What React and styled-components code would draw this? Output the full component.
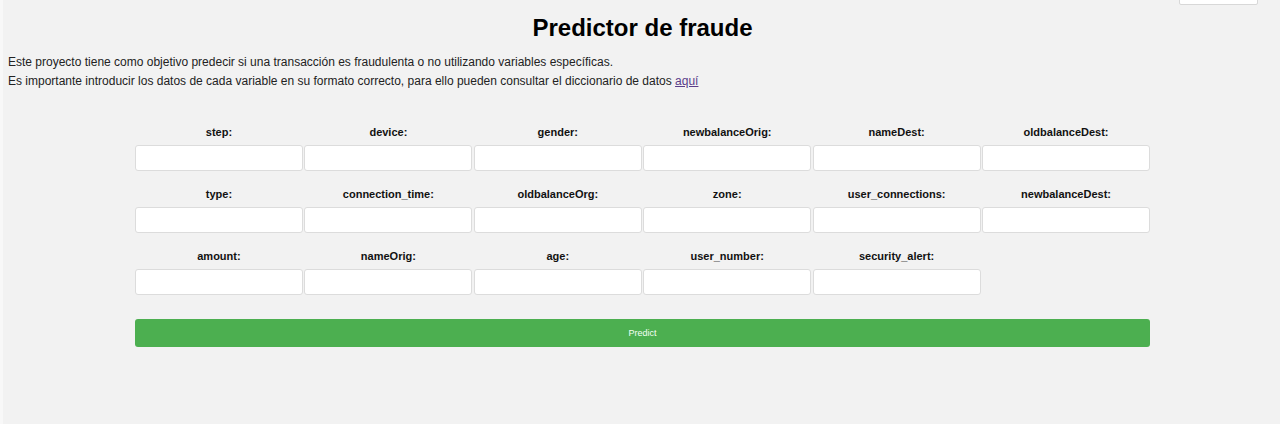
import React from "react";
import styled, { createGlobalStyle } from "styled-components";

const fields = [
  "step",
  "device",
  "gender",
  "newbalanceOrig",
  "nameDest",
  "oldbalanceDest",
  "type",
  "connection_time",
  "oldbalanceOrg",
  "zone",
  "user_connections",
  "newbalanceDest",
  "amount",
  "nameOrig",
  "age",
  "user_number",
  "security_alert",
];

const GlobalStyle = createGlobalStyle`
  html, body {
    margin: 0;
    padding: 0;
    background: #f2f2f2;
  }
  body {
    min-height: 424px;
    border-left: 3px solid #f8f8f8;
    font-family: "Liberation Sans", Arial, sans-serif;
    color: #111;
  }
`;

const Page = styled.div`
  padding: 14px 3px 40px 5px;
  position: relative;
`;

const Widget = styled.div`
  position: absolute;
  top: -20px;
  right: 22px;
  width: 77px;
  height: 23px;
  background: #ffffff;
  border: 1px solid #d8d8d8;
  border-radius: 2px;
`;

const Title = styled.h1`
  margin: 0;
  font-size: 24px;
  line-height: 28px;
  font-weight: bold;
  text-align: center;
  color: #000;
`;

const Intro = styled.p`
  margin: 11px 0 0;
  font-size: 12px;
  line-height: 19px;
  color: #222;
`;

const Link = styled.a`
  color: #5a3d8a;
  text-decoration: underline;
`;

const Form = styled.form`
  width: 1015px;
  margin: 35px auto 0;
`;

const Grid = styled.div`
  display: grid;
  grid-template-columns: repeat(6, 1fr);
  column-gap: 1.5px;
  row-gap: 17px;
`;

const Field = styled.div`
  display: flex;
  flex-direction: column;
  align-items: center;
  gap: 6px;
`;

const Label = styled.label`
  font-size: 11px;
  line-height: 13px;
  font-weight: bold;
  color: #111;
`;

const Input = styled.input`
  box-sizing: border-box;
  width: 100%;
  height: 26px;
  background: #ffffff;
  border: 1px solid #dcdcdc;
  border-radius: 3px;
  outline: none;
`;

const Button = styled.button`
  display: block;
  width: 100%;
  height: 28px;
  margin-top: 24px;
  background: #4caf50;
  color: #f4fff4;
  border: none;
  border-radius: 3px;
  font-family: "Liberation Sans", Arial, sans-serif;
  font-size: 9px;
  cursor: pointer;
`;

export default function App() {
  return (
    <>
      <GlobalStyle />
      <Page>
        <Widget />
        <Title>Predictor de fraude</Title>
        <Intro>
          Este proyecto tiene como objetivo predecir si una transacción es
          fraudulenta o no utilizando variables específicas.
          <br />
          Es importante introducir los datos de cada variable en su formato
          correcto, para ello pueden consultar el diccionario de datos{" "}
          <Link href="#">aquí</Link>
        </Intro>
        <Form onSubmit={(e) => e.preventDefault()}>
          <Grid>
            {fields.map((f) => (
              <Field key={f}>
                <Label htmlFor={f}>{f}:</Label>
                <Input id={f} name={f} type="text" />
              </Field>
            ))}
          </Grid>
          <Button type="submit">Predict</Button>
        </Form>
      </Page>
    </>
  );
}
